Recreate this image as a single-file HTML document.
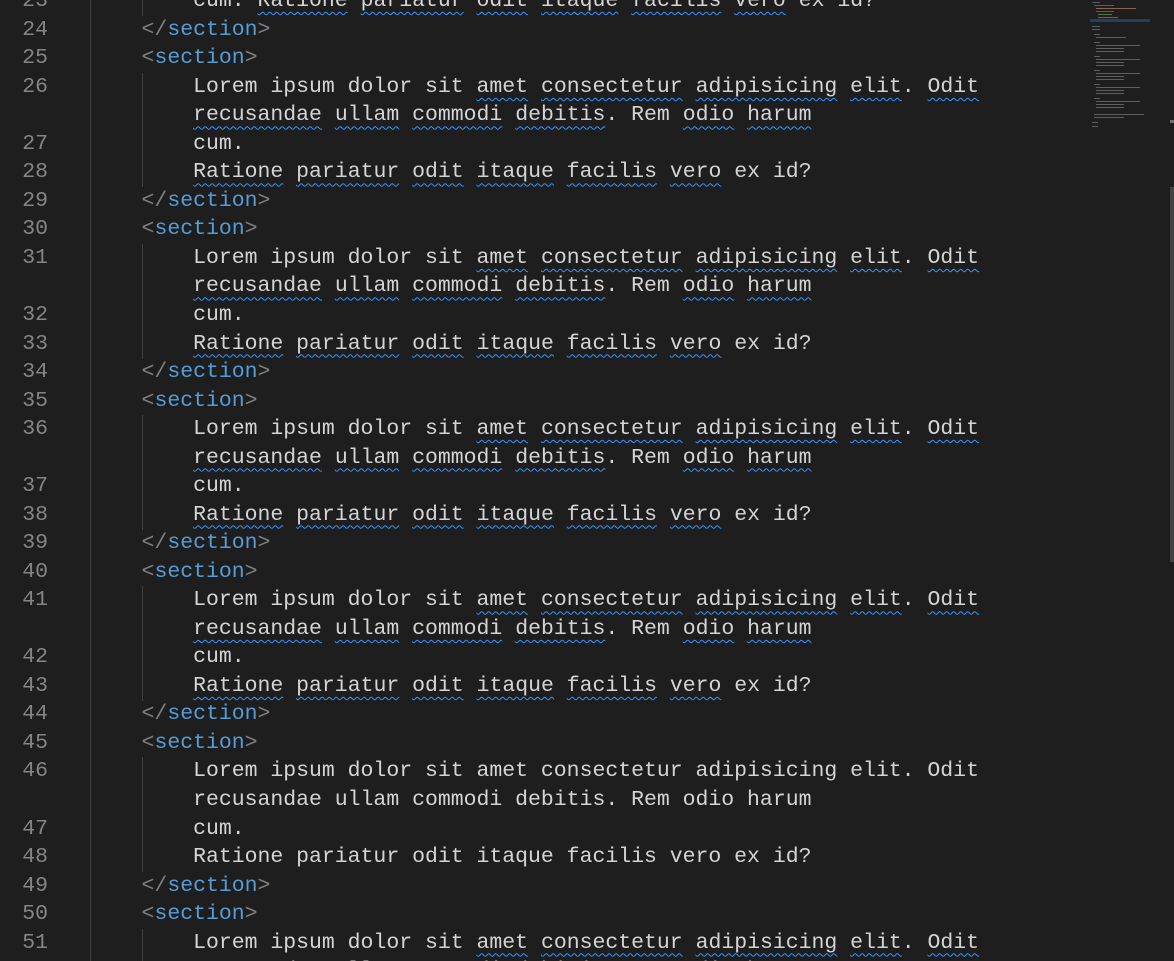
<!DOCTYPE html>
<html><head><meta charset="utf-8"><style>
html,body{margin:0;padding:0;background:#1e1e1e;width:1174px;height:961px;overflow:hidden}
#wrap{position:relative;width:1174px;height:961px;overflow:hidden;background:#1e1e1e}
.r{position:absolute;left:0;height:28.53px;line-height:28.53px;font-family:"Liberation Mono","DejaVu Sans Mono",monospace;font-size:21.47px;color:#d4d4d4;white-space:pre}
.n{position:absolute;left:0;width:48px;text-align:right;color:#858585}
.c{position:absolute;left:90px}
.p{color:#808080}.t{color:#569cd6}
.w{text-decoration:underline wavy #3794ff;text-decoration-thickness:1px;text-underline-offset:5px;text-decoration-skip-ink:none}
.g{position:absolute;width:1px;background:#404040}
.mm{position:absolute;left:1090px;top:0;width:60px;height:130px}
.sb{position:absolute;left:1170px;top:187px;width:4px;height:375px;background:#424242}
</style></head><body>
<div id="wrap">
<div class="g" style="left:90px;top:0;height:961px"></div>
<div id="rows"></div>
<svg class="mm" viewBox="0 0 60 130">
<g fill="#6a7a8a" opacity="0.7">
<rect x="2" y="2" width="8" height="1"/><rect x="4" y="5" width="20" height="1"/><rect x="6" y="8" width="40" height="1" fill="#c08060"/><rect x="6" y="11" width="18" height="1"/>
<rect x="8" y="14" width="14" height="1" fill="#6a9955"/><rect x="8" y="17" width="20" height="1" fill="#6a9955"/>
<rect x="0" y="19" width="60" height="3" fill="#264f78"/>
<rect x="2" y="26" width="8" height="1"/><rect x="2" y="29" width="8" height="1"/>
</g>
<g fill="#8a8a8a" opacity="0.6">
<rect x="4" y="34" width="6" height="1"/><rect x="6" y="37" width="30" height="1"/>
<rect x="4" y="42" width="6" height="1"/><rect x="6" y="45" width="44" height="1"/><rect x="6" y="48" width="28" height="1"/><rect x="6" y="51" width="28" height="1"/>
<rect x="4" y="56" width="6" height="1"/><rect x="6" y="59" width="44" height="1"/><rect x="6" y="62" width="28" height="1"/><rect x="6" y="65" width="28" height="1"/>
<rect x="4" y="70" width="6" height="1"/><rect x="6" y="73" width="44" height="1"/><rect x="6" y="76" width="28" height="1"/><rect x="6" y="79" width="28" height="1"/>
<rect x="4" y="84" width="6" height="1"/><rect x="6" y="87" width="44" height="1"/><rect x="6" y="90" width="28" height="1"/><rect x="6" y="93" width="28" height="1"/>
<rect x="4" y="98" width="6" height="1"/><rect x="6" y="101" width="44" height="1"/><rect x="6" y="104" width="28" height="1"/><rect x="6" y="107" width="28" height="1"/>
<rect x="4" y="114" width="50" height="1"/><rect x="4" y="117" width="30" height="1"/><rect x="2" y="122" width="6" height="1"/><rect x="2" y="126" width="6" height="1"/>
</g>
</svg>
<div style="position:absolute;left:1170px;top:120px;width:4px;height:3px;background:#707070"></div>
<div class="sb"></div>
</div>
<script>
var H=28.53,T=15.7;
var out='';
function row(i,num,content,indent,guide){
  var top=T+i*H;
  if(guide) out+='<div class="g" style="left:142px;top:'+top+'px;height:'+(H+0.5)+'px"></div>';
  out+='<div class="r" style="top:'+top+'px;width:1174px"><span class="n">'+(num||'')+'</span><span class="c">'+content+'</span></div>';
}
function w(s,sq){return sq?'<span class="w">'+s+'</span>':s;}
var open='<span class="p">&lt;</span><span class="t">section</span><span class="p">&gt;</span>';
var close='<span class="p">&lt;/</span><span class="t">section</span><span class="p">&gt;</span>';
var ind='    ',ind2='        ';
function l1(q){return ind2+'Lorem ipsum dolor sit '+w('amet',q)+' '+w('consectetur',q)+' '+w('adipisicing',q)+' '+w('elit',q)+'. '+w('Odit',q);}
function l2(q){return ind2+w('recusandae',q)+' '+w('ullam',q)+' '+w('commodi',q)+' '+w('debitis',q)+'. Rem '+w('odio',q)+' '+w('harum',q);}
function l4(q){return ind2+w('Ratione',q)+' '+w('pariatur',q)+' '+w('odit',q)+' '+w('itaque',q)+' '+w('facilis',q)+' '+w('vero',q)+' ex id?';}
row(-1,23,ind2+'cum. '+l4(true).slice(8),0,true);
row(0,24,ind+close);
var i=1,n=25;
for(var s=0;s<5;s++){
  var q=(s!==4);
  row(i++,n++,ind+open);
  row(i++,n++,l1(q),0,true);
  row(i++,'',l2(q),0,true);
  row(i++,n++,ind2+'cum.',0,true);
  row(i++,n++,l4(q),0,true);
  row(i++,n++,ind+close);
}
row(i++,50,ind+open);
row(i++,51,l1(true),0,true);
row(i++,'',l2(true),0,true);
document.getElementById('rows').innerHTML=out;
</script>
</body></html>
